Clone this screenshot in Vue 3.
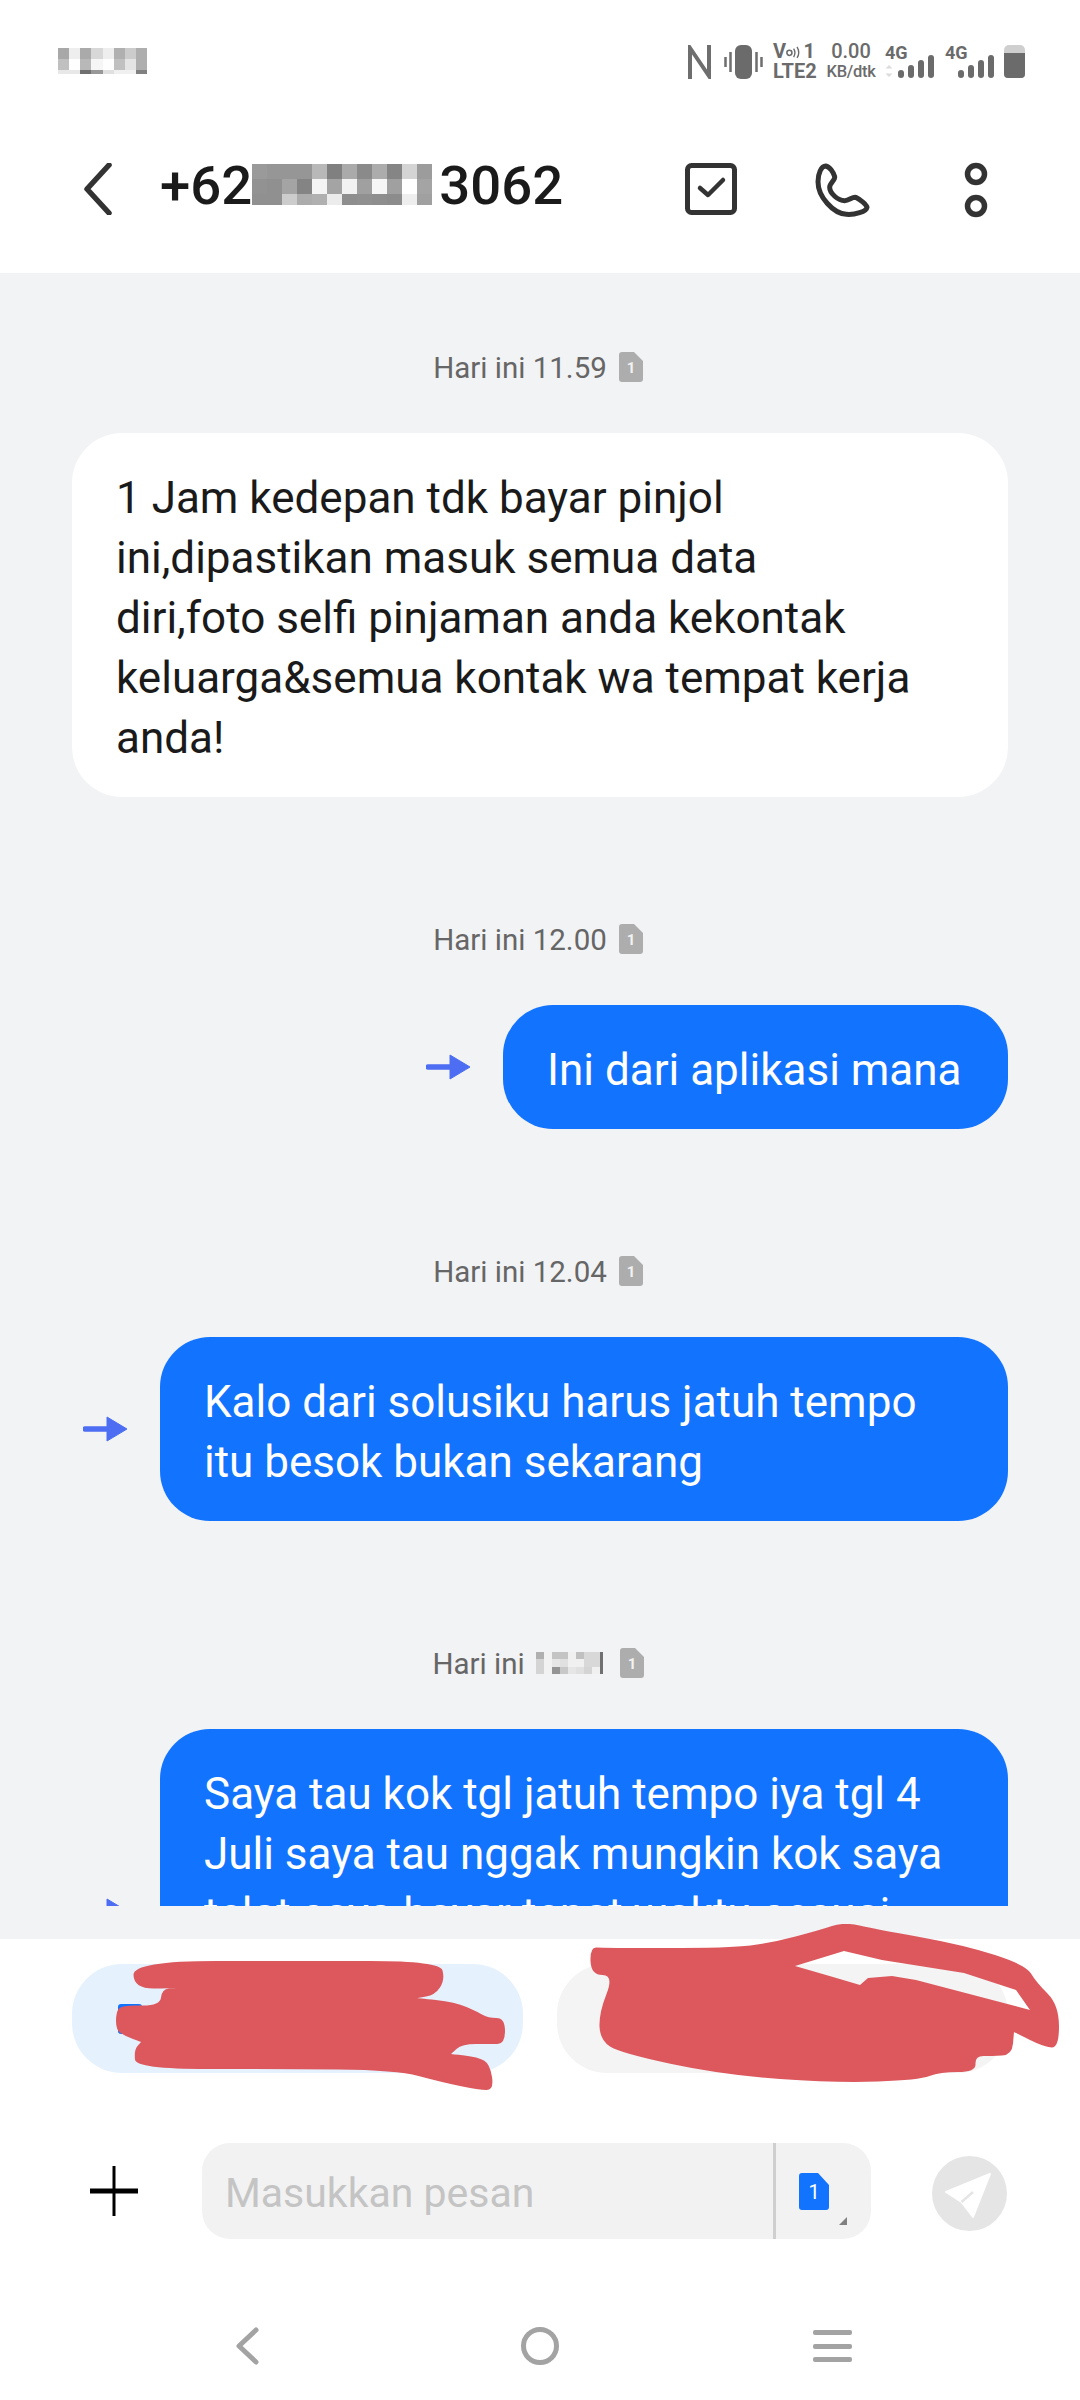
<template>
  <div class="phone">
    <div class="status-bar">
      <svg class="blur-time" width="89" height="26" viewBox="0 0 89 26" shape-rendering="crispEdges">
        <rect v-for="(c, i) in timeCells" :key="i" :x="c.x" :y="c.y" :width="c.w" :height="c.h" :fill="c.fill" />
      </svg>

      <div class="status-right">
        <svg class="nfc" width="23" height="34" viewBox="0 0 23 34">
          <path d="M2 34V3L21 31V0" fill="none" stroke="#6e6e6e" stroke-width="4" />
        </svg>
        <svg class="vibrate" width="39" height="34" viewBox="0 0 39 34">
          <rect x="11" y="0" width="17" height="34" rx="6" fill="#6b6b6b" />
          <path d="M1.5 12V22M6.5 7V27M32.5 7V27M37.5 12V22" stroke="#6e6e6e" stroke-width="2.5" />
        </svg>
        <div class="stack sim-info">
          <div class="volte">
            <span>V</span>
            <svg width="17" height="14" viewBox="0 0 17 14">
              <circle cx="4" cy="8" r="3" fill="none" stroke="#6b6b6b" stroke-width="1.8" />
              <path d="M9 3Q12 8 9 13M13 1Q17 8 13 14" fill="none" stroke="#6b6b6b" stroke-width="1.6" />
            </svg>
            <span class="volte-num">1</span>
          </div>
          <div>LTE2</div>
        </div>
        <div class="stack speed">
          <div class="speed-num">0.00</div>
          <div class="speed-unit">KB/dtk</div>
        </div>
        <svg class="signal" width="49" height="34" viewBox="0 0 49 34">
          <text x="0" y="14" class="net">4G</text>
          <path d="M4 20L7.500 23.500H0.500ZM4 32L7.500 28.500H0.500Z" fill="#dcdcdc" />
          <rect v-for="b in bars" :key="b.x" :x="b.x + 13" :y="b.y" width="6" :height="b.h" rx="3" fill="#6b6b6b" />
        </svg>
        <svg class="signal second" width="49" height="34" viewBox="0 0 49 34">
          <text x="0" y="14" class="net">4G</text>
          <rect v-for="b in bars" :key="b.x" :x="b.x + 13" :y="b.y" width="6" :height="b.h" rx="3" fill="#6b6b6b" />
        </svg>
        <div class="battery"><div class="battery-fill"></div></div>
      </div>
    </div>

    <header class="top-bar">
      <svg class="back" width="29" height="52" viewBox="0 0 29 52">
        <path d="M26 2L4 26L26 50" fill="none" stroke="#333" stroke-width="5.500" stroke-linecap="round" stroke-linejoin="round" />
      </svg>
      <div class="title">
        <span>+62</span>
        <svg class="blur-number" width="180" height="41" viewBox="0 0 180 41" shape-rendering="crispEdges">
          <rect v-for="(c, i) in numberCells" :key="i" :x="c.x" :y="c.y" :width="c.w" :height="c.h" :fill="c.fill" />
        </svg>
        <span>3062</span>
      </div>
      <svg class="act-check" width="52" height="52" viewBox="0 0 52 52">
        <rect x="2.500" y="2.500" width="47" height="47" rx="4" fill="none" stroke="#333" stroke-width="5" />
        <path d="M15 25L23 32L38 17" fill="none" stroke="#333" stroke-width="4.500" stroke-linecap="round" stroke-linejoin="round" />
      </svg>
      <svg class="act-phone" width="60" height="60" viewBox="430 30 180 180">
        <path d="M468 48C480 50 492 68 495 80C497 90 480 100 480 112C480 130 505 152 525 152C538 152 548 140 558 142C570 148 590 162 592 172C590 185 555 195 530 193C490 190 445 140 445 95C445 70 455 48 468 48Z" fill="none" stroke="#333" stroke-width="15" stroke-linejoin="round" />
      </svg>
      <svg class="act-more" width="24" height="56" viewBox="0 0 24 56">
        <circle cx="12" cy="12" r="8.500" fill="none" stroke="#333" stroke-width="5.500" />
        <circle cx="12" cy="44" r="8.500" fill="none" stroke="#333" stroke-width="5.500" />
      </svg>
    </header>

    <main class="chat">
      <div class="chat-scroll">
        <section v-for="m in messages" :key="m.id" class="group">
          <div class="time">
            <span>{{ m.time }}</span>
            <svg v-if="m.blurred" class="blur-stamp" width="67" height="22" viewBox="0 0 67 22" shape-rendering="crispEdges">
              <rect v-for="(c, i) in stampCells" :key="i" :x="c.x" :y="c.y" :width="c.w" :height="c.h" :fill="c.fill" />
            </svg>
            <svg class="sim-small" width="24" height="30" viewBox="0 0 24 30">
              <path d="M3 0H15L24 9V27Q24 30 21 30H3Q0 30 0 27V3Q0 0 3 0Z" fill="#adadad" />
              <text x="12" y="21" class="sim-num">1</text>
            </svg>
          </div>
          <div class="row" :class="{ out: m.out }">
            <svg v-if="m.out" width="44" height="26" viewBox="0 0 44 26">
              <path d="M2 13H26" stroke="#4d6ef2" stroke-width="5.500" stroke-linecap="round" />
              <path d="M24 1L44 13L24 25Z" fill="#4d6ef2" stroke="#4d6ef2" stroke-width="1" stroke-linejoin="round" />
            </svg>
            <div class="bubble" :class="{ sent: m.out, wide: m.wide, tall: m.tall }">{{ m.text }}</div>
          </div>
        </section>
      </div>
    </main>

    <section class="suggestions">
      <div class="pill pill-blue"><div class="pill-sim"></div></div>
      <div class="pill pill-grey"></div>
      <svg class="scribble" width="1080" height="180" viewBox="0 1924 1080 180">
        <path :d="leftScribble" fill="#dc585d" />
        <path :d="rightScribble" fill="#dc585d" fill-rule="evenodd" />
      </svg>
    </section>

    <div class="composer">
      <svg class="plus" width="48" height="50" viewBox="0 0 48 50">
        <path d="M24 0V50" stroke="#000" stroke-width="3" />
        <path d="M0 25H48" stroke="#000" stroke-width="5" />
      </svg>
      <div class="input">
        <div class="placeholder">Masukkan pesan</div>
        <div class="sim-picker">
          <svg width="30" height="37" viewBox="0 0 30 37">
            <path d="M3 0H19L30 12V34Q30 37 27 37H3Q0 37 0 34V3Q0 0 3 0Z" fill="#1273ff" />
            <text x="15" y="26" class="sim-num-blue">1</text>
          </svg>
          <svg class="corner" width="8" height="8" viewBox="0 0 8 8"><path d="M8 0V8H0Z" fill="#808080" /></svg>
        </div>
      </div>
      <svg class="send" width="75" height="75" viewBox="0 0 75 75">
        <circle cx="37.500" cy="37.500" r="37.500" fill="#e5e5e5" />
        <path d="M58 18L14 36L29.500 46L41 61Z" fill="#fff" stroke="#fff" stroke-width="2" stroke-linejoin="round" />
        <path d="M29.500 46L41 36" stroke="#e5e5e5" stroke-width="2.500" />
      </svg>
    </div>

    <nav class="nav-bar">
      <svg class="nav-back" width="24" height="38" viewBox="0 0 24 38">
        <path d="M21 3L4 19L21 35" fill="none" stroke="#a3a3a3" stroke-width="5" stroke-linecap="round" stroke-linejoin="round" />
      </svg>
      <div class="nav-home"></div>
      <div class="nav-menu"><span></span><span></span><span></span></div>
    </nav>
  </div>
</template>

<script setup>
const grey = (v) => `#${v}${v}${v}`

// pixelated patches, one colour per cell
const gridCells = (rows, cellW, rowHeights) => {
  const cells = []
  let y = 0
  rows.forEach((row, r) => {
    row.forEach((v, c) => {
      cells.push({ x: c * cellW, y, w: cellW, h: rowHeights[r], fill: grey(v) })
    })
    y += rowHeights[r]
  })
  return cells
}

const timeCells = gridCells([
  ['a8', 'ee', 'aa', 'd8', 'ee', 'b0', 'cc', 'ae'],
  ['c0', 'fe', 'b8', 'f6', 'fe', 'c0', 'e4', 'ae'],
  ['e8', 'e8', '70', '98', 'e0', 'f0', 'f0', '80']
], 11.125, [11, 11, 4])

const numberCells = gridCells([
  ['9a', '96', '96', '96', 'b8', '80', 'aa', '8a', 'ac', '85', 'd4', '9c'],
  ['92', '90', 'a4', '84', 'f4', 'a4', 'f2', 'a0', 'f6', 'a0', 'ff', 'a4'],
  ['90', '90', 'cc', 'ac', 'b0', 'ec', '8e', '90', '8e', '8c', 'ee', 'a0']
], 15, [15, 15, 11])

const stampCells = [
  ...gridCells([
    ['b0', 'f2', 'c4', 'c4', 'f0', 'c0', 'd8', 'd8'],
    ['d4', 'f2', 'e6', 'e0', 'f0', 'f0', 'd8', 'd8'],
    ['d4', 'f2', '94', 'c8', 'e6', 'e0', 'd4', 'f0']
  ], 8, [7.34, 7.33, 7.33]),
  { x: 64, y: 0, w: 3, h: 22, fill: '#707070' }
]

const bars = [
  { x: 0, y: 25, h: 8 },
  { x: 10, y: 20, h: 13 },
  { x: 20, y: 15, h: 18 },
  { x: 30, y: 10, h: 23 }
]

const messages = [
  {
    id: 1,
    time: 'Hari ini 11.59',
    text: '1 Jam kedepan tdk bayar pinjol\nini,dipastikan masuk semua data\ndiri,foto selfi pinjaman anda kekontak\nkeluarga&semua kontak wa tempat kerja\nanda!',
    out: false
  },
  { id: 2, time: 'Hari ini 12.00', text: 'Ini dari aplikasi mana', out: true },
  {
    id: 3,
    time: 'Hari ini 12.04',
    text: 'Kalo dari solusiku harus jatuh tempo\nitu besok bukan sekarang',
    out: true,
    wide: true
  },
  {
    id: 4,
    time: 'Hari ini',
    blurred: true,
    text: 'Saya tau kok tgl jatuh tempo iya tgl 4\nJuli saya tau nggak mungkin kok saya\ntelat saya bayar tepat waktu sesuai',
    out: true,
    wide: true,
    tall: true
  }
]

// closed smooth outline through a list of points
const blob = (pts) => {
  const mid = (a, b) => [(a[0] + b[0]) / 2, (a[1] + b[1]) / 2]
  const start = mid(pts[pts.length - 1], pts[0])
  let d = `M${start[0]} ${start[1]}`
  pts.forEach((p, i) => {
    const m = mid(p, pts[(i + 1) % pts.length])
    d += `Q${p[0]} ${p[1]} ${m[0]} ${m[1]}`
  })
  return d + 'Z'
}

const leftScribble = blob([
  [133, 1961], [300, 1961], [440, 1961], [445, 1980], [435, 1995], [417, 1998], [417, 1998],
  [455, 2002], [478, 2012], [488, 2018], [505, 2018], [505, 2044], [490, 2044], [462, 2044],
  [451, 2054], [451, 2054], [478, 2057], [490, 2064], [494, 2090], [479, 2090], [441, 2082],
  [396, 2070], [280, 2069], [136, 2069], [134, 2050], [141, 2042], [141, 2042], [125, 2036],
  [116, 2030], [116, 2012], [122, 2005], [160, 2006], [162, 1989], [176, 1988], [176, 1988], [134, 1989]
])

const rightScribble = blob([
  [591, 1975], [590, 1947], [603, 1948], [730, 1948], [771, 1943], [820, 1930], [844, 1922],
  [875, 1929], [964, 1945], [1026, 1965], [1036, 1982], [1059, 2005], [1059, 2048], [1044, 2047],
  [1014, 2032], [1014, 2032], [1012, 2055], [992, 2056], [975, 2056], [976, 2072], [940, 2072],
  [919, 2080], [837, 2083], [723, 2075], [620, 2053], [600, 2040], [599, 2013], [614, 1975]
]) + 'M795 1966L844 1951L882 1960L964 1973L1016 1990L1030 2010L916 1980L892 1976L868 1978L860 1985L833 1977Z'
</script>

<style scoped>
.phone {
  width: 1080px;
  height: 2400px;
  background: #fff;
  display: flex;
  flex-direction: column;
  font-family: Roboto, "Noto Sans", sans-serif;
  overflow: hidden;
}

.status-bar {
  height: 120px;
  box-sizing: border-box;
  padding: 45px 55px 0 58px;
  display: flex;
  justify-content: space-between;
  align-items: flex-start;
}

.blur-time {
  margin-top: 3px;
}

.status-right {
  display: flex;
  align-items: flex-start;
  color: #6b6b6b;
}

.vibrate {
  margin-left: 13px;
}

.stack {
  height: 39px;
  margin-top: -3px;
  display: flex;
  flex-direction: column;
  justify-content: space-between;
  font-weight: 700;
  line-height: 19.500px;
}

.sim-info {
  width: 42px;
  margin-left: 10px;
  font-size: 20px;
}

.volte {
  display: flex;
  align-items: center;
}

.volte-num {
  margin-left: 3px;
}

.speed {
  width: 48px;
  margin-left: 12px;
  align-items: center;
}

.speed-num {
  font-size: 20px;
  font-weight: 500;
}

.speed-unit {
  font-size: 16.500px;
  font-weight: 500;
  letter-spacing: -0.3px;
  white-space: nowrap;
}

.signal {
  margin-left: 10px;
  overflow: visible;
}

.signal.second {
  margin-left: 11px;
}

.net {
  font-size: 18px;
  font-weight: 700;
  fill: #6b6b6b;
}

.battery {
  width: 21px;
  height: 33px;
  margin-left: 10px;
  background: #cfcfcf;
  border-radius: 5px 5px 4px 4px;
  overflow: hidden;
  display: flex;
  align-items: flex-end;
}

.battery-fill {
  width: 100%;
  height: 25px;
  background: #6b6b6b;
}

.top-bar {
  height: 153px;
  box-sizing: border-box;
  padding: 43px 0 0 83px;
  display: flex;
  align-items: flex-start;
}

.back {
  flex: none;
}

.title {
  margin-left: 48px;
  margin-top: -4px;
  width: 525px;
  display: flex;
  align-items: center;
  height: 52px;
  font-size: 54.500px;
  font-weight: 500;
  color: #1a1a1a;
}

.blur-number {
  margin: -2px 7px 0 0;
}

.act-phone {
  margin-left: 76px;
  margin-top: -3px;
}

.act-more {
  margin-left: 91px;
  margin-top: -1px;
}

.chat {
  height: 1666px;
  box-sizing: border-box;
  padding-bottom: 33px;
  background: #f2f3f5;
}

.chat-scroll {
  height: 100%;
  overflow: hidden;
  padding: 79px 72px 0;
  box-sizing: border-box;
}

.group {
  margin-bottom: 127px;
}

.time {
  height: 30px;
  margin-bottom: 51px;
  padding-right: 4px;
  display: flex;
  justify-content: center;
  align-items: center;
  font-size: 29.500px;
  color: #666;
}

.time span {
  padding-top: 2px;
}

.sim-small {
  margin-left: 12px;
}

.blur-stamp {
  margin-left: 11px;
  margin-right: 5px;
}

.sim-num {
  font-size: 15px;
  font-weight: 700;
  fill: #f2f2f2;
  text-anchor: middle;
}

.row {
  display: flex;
  align-items: center;
}

.row.out {
  justify-content: flex-end;
  gap: 33px;
}

.bubble {
  background: #fff;
  color: #1a1a1a;
  border-radius: 50px;
  padding: 35px 44px 29px;
  font-size: 44px;
  line-height: 60px;
  white-space: pre-line;
  width: 100%;
  box-sizing: border-box;
}

.bubble.sent {
  background: #1273ff;
  color: #fff;
  width: auto;
  min-width: 505px;
}

.bubble.wide {
  width: 848px;
}

.bubble.tall {
  min-height: 364px;
}

.suggestions {
  position: relative;
  height: 204px;
  box-sizing: border-box;
  padding: 25px 72px 0;
  display: flex;
  gap: 34px;
}

.pill {
  width: 451px;
  height: 109px;
  border-radius: 50px;
}

.pill-blue {
  background: #e6f1fe;
  position: relative;
}

.pill-grey {
  background: #f4f4f4;
}

.pill-sim {
  position: absolute;
  left: 46px;
  top: 40px;
  width: 24px;
  height: 30px;
  border-radius: 3px;
  background: #1273ff;
}

.scribble {
  position: absolute;
  left: 0;
  top: -15px;
}

.composer {
  height: 96px;
  padding-left: 90px;
  display: flex;
  align-items: center;
}

.input {
  margin-left: 64px;
  width: 669px;
  height: 96px;
  border-radius: 28px;
  background: #f2f2f2;
  display: flex;
  align-items: center;
}

.placeholder {
  width: 571px;
  box-sizing: border-box;
  padding: 4px 0 0 23px;
  font-size: 41px;
  color: #c4c4c4;
}

.sim-picker {
  position: relative;
  flex: 1;
  height: 100%;
  border-left: 3px solid #cfcfcf;
  box-sizing: border-box;
  padding: 30px 0 0 23px;
}

.sim-picker svg {
  display: block;
}

.sim-num-blue {
  font-size: 20px;
  fill: #fff;
  text-anchor: middle;
}

.corner {
  position: absolute;
  right: 24px;
  bottom: 14px;
}

.send {
  margin-left: 61px;
  margin-top: 5px;
}

.nav-bar {
  flex: 1;
  box-sizing: border-box;
  padding: 88px 0 0 235px;
  display: flex;
  align-items: flex-start;
}

.nav-home {
  margin-left: 262px;
  width: 38px;
  height: 38px;
  box-sizing: border-box;
  border: 5px solid #a3a3a3;
  border-radius: 50%;
}

.nav-menu {
  margin-left: 254px;
  width: 39px;
  height: 32px;
  margin-top: 3px;
  display: flex;
  flex-direction: column;
  justify-content: space-between;
}

.nav-menu span {
  height: 5px;
  border-radius: 2px;
  background: #a3a3a3;
}
</style>
